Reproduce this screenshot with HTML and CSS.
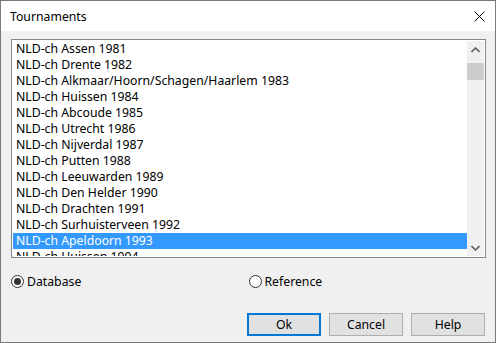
FILE: index.html
```html
<!DOCTYPE html>
<html lang="en">
<head>
    <meta charset="UTF-8">
    <title>Tournaments</title>
    <link rel="stylesheet" href="styles.css">
</head>
<body>
    <div class="window">
        <div class="titlebar">
            <span class="title">Tournaments</span>
            <svg class="close" width="11" height="11" viewBox="0 0 11 11">
                <path d="M0.5 0.5 L10.5 10.5 M10.5 0.5 L0.5 10.5" stroke="#000" stroke-width="1" fill="none"/>
            </svg>
        </div>
        <div class="content">
            <div class="listbox">
                <ul class="items">
                    <li>NLD-ch Assen 1981</li>
                    <li>NLD-ch Drente 1982</li>
                    <li>NLD-ch Alkmaar/Hoorn/Schagen/Haarlem 1983</li>
                    <li>NLD-ch Huissen 1984</li>
                    <li>NLD-ch Abcoude 1985</li>
                    <li>NLD-ch Utrecht 1986</li>
                    <li>NLD-ch Nijverdal 1987</li>
                    <li>NLD-ch Putten 1988</li>
                    <li>NLD-ch Leeuwarden 1989</li>
                    <li>NLD-ch Den Helder 1990</li>
                    <li>NLD-ch Drachten 1991</li>
                    <li>NLD-ch Surhuisterveen 1992</li>
                    <li class="selected">NLD-ch Apeldoorn 1993</li>
                    <li>NLD-ch Huissen 1994</li>
                </ul>
                <div class="scrollbar">
                    <div class="arrow">
                        <svg width="9" height="6" viewBox="0 0 9 6"><path d="M0.5 5 L4.5 1 L8.5 5" stroke="#606060" stroke-width="1.6" fill="none"/></svg>
                    </div>
                    <div class="track">
                        <div class="thumb"></div>
                    </div>
                    <div class="arrow">
                        <svg width="9" height="6" viewBox="0 0 9 6"><path d="M0.5 1 L4.5 5 L8.5 1" stroke="#606060" stroke-width="1.6" fill="none"/></svg>
                    </div>
                </div>
            </div>

            <div class="options">
                <label class="radio-item">
                    <span class="radio checked"></span>
                    <span>Database</span>
                </label>
                <label class="radio-item">
                    <span class="radio"></span>
                    <span>Reference</span>
                </label>
            </div>

            <div class="buttons">
                <button class="default">Ok</button>
                <button>Cancel</button>
                <button>Help</button>
            </div>
        </div>
    </div>
</body>
</html>
```

FILE: styles.css
```css
html, body {
    margin: 0;
    padding: 0;
}
body {
    font-family: 'Noto Sans', 'Liberation Sans', sans-serif;
    font-size: 12.25px;
    color: #000;
    background: #f0f0f0;
}
.window {
    box-sizing: border-box;
    width: 496px;
    height: 343px;
    border: 1px solid #7a7a7a;
    background: #f0f0f0;
    display: flex;
    flex-direction: column;
}
.titlebar {
    height: 30px;
    background: #fff;
    display: flex;
    align-items: center;
    justify-content: space-between;
    padding: 0 10px 0 9px;
}
.close { margin-top: 1px; }
.content {
    display: flex;
    flex-direction: column;
    padding: 8px 9px 0 10px;
}
.listbox {
    box-sizing: border-box;
    width: 475px;
    height: 219px;
    border: 1px solid #828790;
    background: #fff;
    padding: 1px;
    display: flex;
}
.items {
    list-style: none;
    margin: 0;
    padding: 0;
    flex: 1;
    height: 215px;
    overflow: hidden;
}
.items li {
    height: 16px;
    line-height: 16px;
    padding-left: 3px;
    white-space: nowrap;
}
.items li.selected {
    background: #3399ff;
    color: #fff;
}
.scrollbar {
    width: 17px;
    background: #f0f0f0;
    display: flex;
    flex-direction: column;
}
.arrow {
    height: 17px;
    display: flex;
    align-items: center;
    justify-content: center;
}
.track {
    flex: 1;
    padding-top: 5px;
}
.thumb {
    height: 17px;
    background: #cdcdcd;
}
.options {
    display: flex;
    margin-top: 16px;
    height: 14px;
    align-items: center;
}
.radio-item {
    display: flex;
    align-items: center;
    gap: 3px;
    width: 238px;
}
.radio {
    box-sizing: border-box;
    width: 13px;
    height: 13px;
    border: 1px solid #333;
    border-radius: 50%;
    background: #fff;
    display: flex;
    align-items: center;
    justify-content: center;
}
.radio.checked::after {
    content: "";
    width: 7px;
    height: 7px;
    border-radius: 50%;
    background: #333;
}
.buttons {
    display: flex;
    justify-content: flex-end;
    gap: 8px;
    margin-top: 25px;
    padding-right: 1px;
}
button {
    box-sizing: border-box;
    width: 74px;
    height: 23px;
    font-family: inherit;
    font-size: 12.25px;
    background: #e1e1e1;
    border: 1px solid #adadad;
    color: #000;
    padding: 0;
}
button.default {
    border: 2px solid #0078d7;
}
```
